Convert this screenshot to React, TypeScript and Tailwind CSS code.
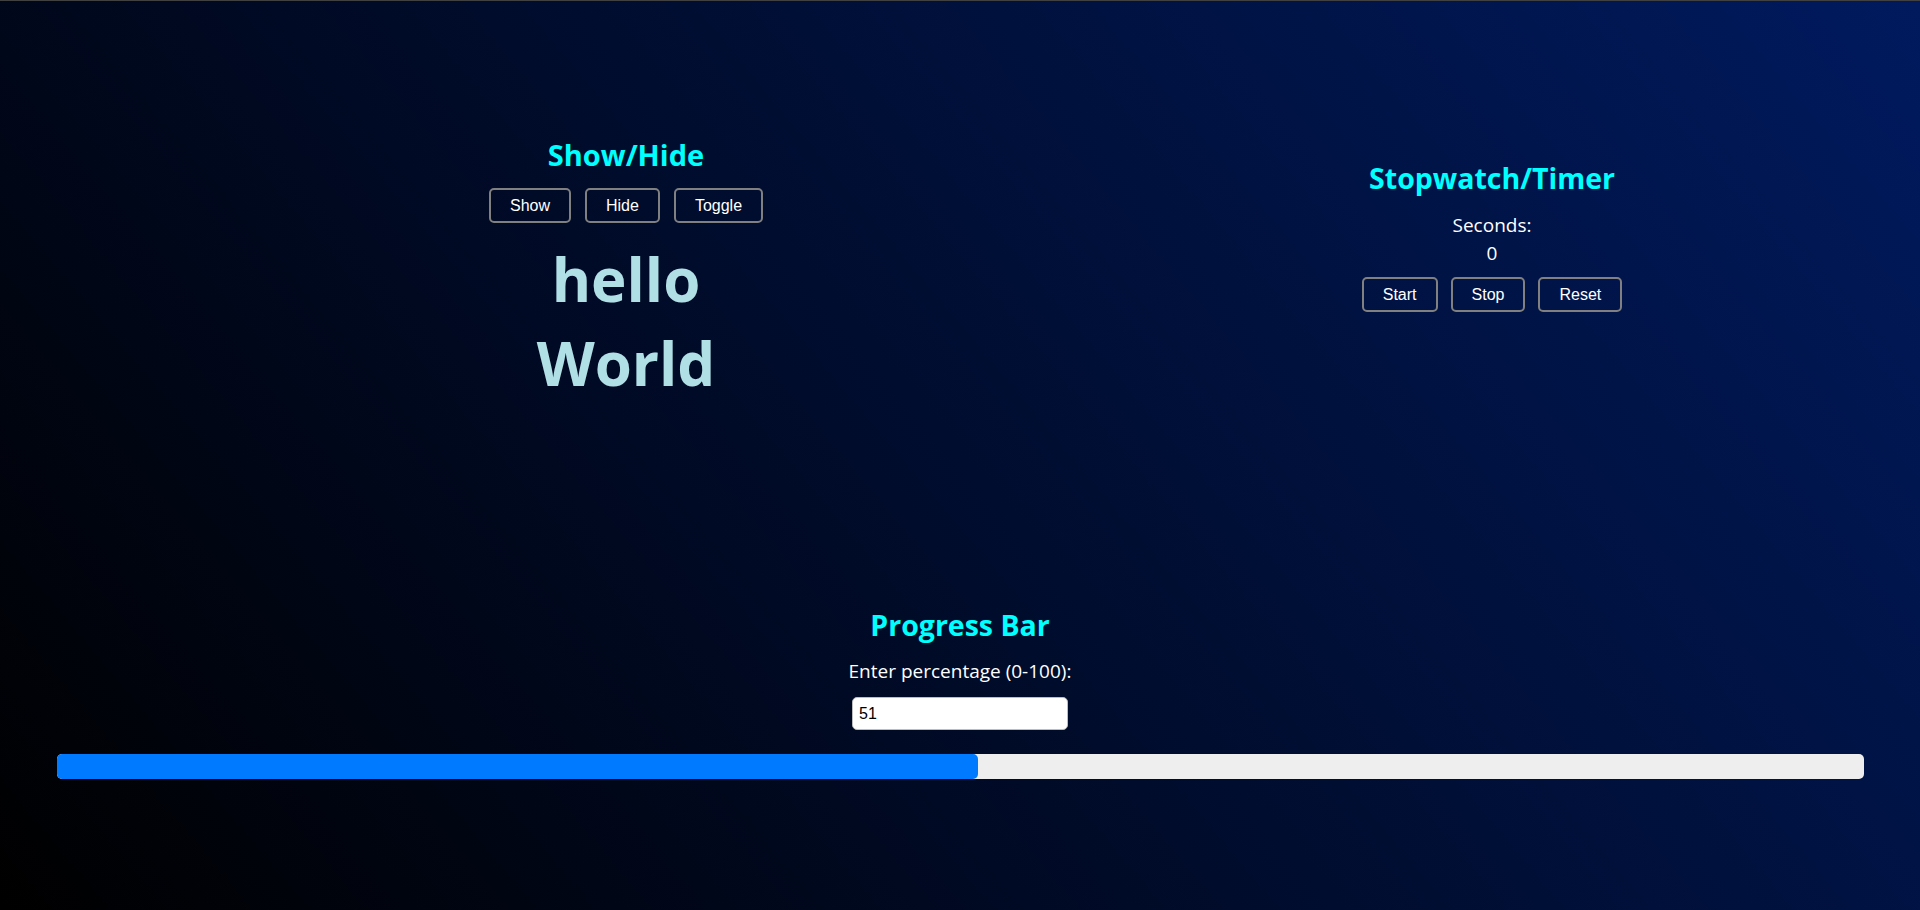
import { useEffect, useRef, useState } from "react";

const btn =
  "h-[35px] px-[19px] border-2 border-[#808080] rounded-[5px] bg-transparent text-white text-[16px] font-['Liberation_Sans',Arial,sans-serif] leading-none";

export default function App() {
  const [visible, setVisible] = useState(true);
  const [seconds, setSeconds] = useState(0);
  const [running, setRunning] = useState(false);
  const [percent, setPercent] = useState("51");
  const timer = useRef<number | null>(null);

  useEffect(() => {
    if (!running) return;
    timer.current = window.setInterval(() => setSeconds((s) => s + 1), 1000);
    return () => {
      if (timer.current) window.clearInterval(timer.current);
    };
  }, [running]);

  const value = Math.min(100, Math.max(0, Number(percent) || 0));

  return (
    <div className="h-[910px] w-full overflow-hidden border-t border-[#414141] bg-[linear-gradient(50deg,#000000_0%,#001a5e_100%)] font-['Open_Sans',sans-serif]">
      {/* Top row */}
      <div className="flex h-[604px] items-start pt-[134px]">
        {/* Show/Hide */}
        <div className="ml-[426px] flex w-[400px] flex-col items-center">
          <h2 className="text-[29px] leading-[40px] font-bold text-[#00ffff]">Show/Hide</h2>
          <div className="mt-[13px] flex gap-[14px]">
            <button className={btn} onClick={() => setVisible(true)}>
              Show
            </button>
            <button className={btn} onClick={() => setVisible(false)}>
              Hide
            </button>
            <button className={btn} onClick={() => setVisible((v) => !v)}>
              Toggle
            </button>
          </div>
          {visible && (
            <div className="mt-[14px] text-center text-[60px] leading-[84px] font-bold text-[#b0e0e6]">
              <p>hello</p>
              <p>World</p>
            </div>
          )}
        </div>

        {/* Stopwatch/Timer */}
        <div className="ml-[466px] mt-[23px] flex w-[400px] flex-col items-center">
          <h2 className="text-[28.5px] leading-[40px] font-bold text-[#00ffff]">Stopwatch/Timer</h2>
          <p className="mt-[13px] text-[19px] leading-[28px] text-white">Seconds:</p>
          <p className="text-[19px] leading-[28px] text-white">{seconds}</p>
          <div className="mt-[10px] flex gap-[13px]">
            <button className={btn} onClick={() => setRunning(true)}>
              Start
            </button>
            <button className={btn} onClick={() => setRunning(false)}>
              Stop
            </button>
            <button
              className={btn}
              onClick={() => {
                setRunning(false);
                setSeconds(0);
              }}
            >
              Reset
            </button>
          </div>
        </div>
      </div>

      {/* Progress Bar */}
      <div className="flex flex-col items-center">
        <h2 className="text-[28.5px] leading-[40px] font-bold text-[#00ffff]">Progress Bar</h2>
        <label className="mt-[14px] text-[19px] leading-[24px] text-white">Enter percentage (0-100):</label>
        <input
          value={percent}
          onChange={(e) => setPercent(e.target.value)}
          className="mt-[14px] h-[33px] w-[216px] rounded-[5px] border border-[#bdbdbd] bg-white pl-[6px] text-[16px] text-black outline-none font-['Liberation_Sans',Arial,sans-serif]"
        />
        <div className="mt-[24px] h-[25px] w-[1807px] rounded-[5px] bg-[#eeeeee]">
          <div className="h-full rounded-[5px] bg-[#007bff]" style={{ width: `${value}%` }} />
        </div>
      </div>
    </div>
  );
}
